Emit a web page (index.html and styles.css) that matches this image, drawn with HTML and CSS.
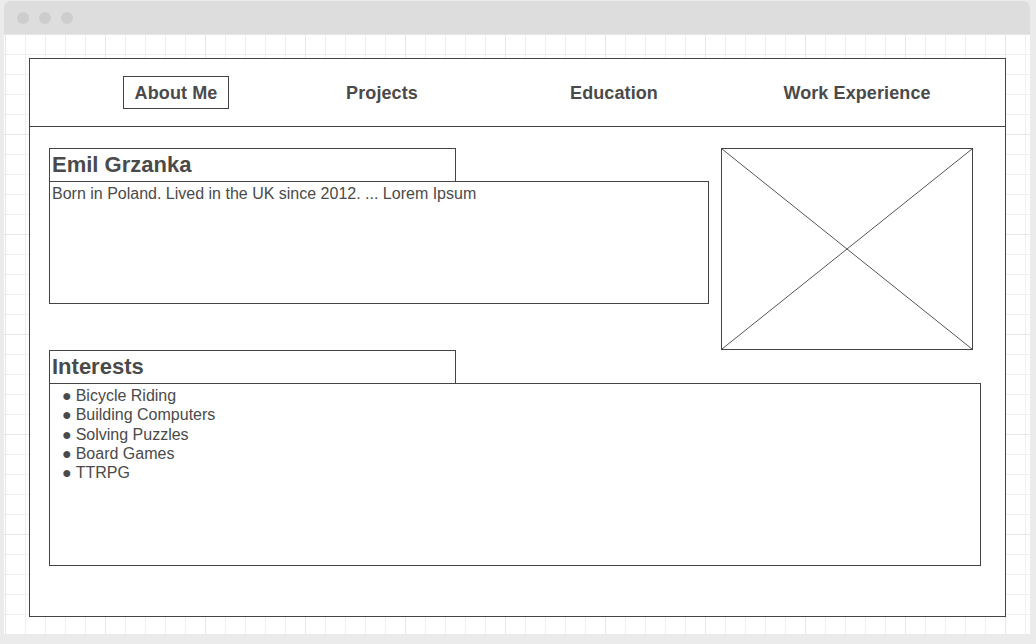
FILE: index.html
```html
<!DOCTYPE html>
<html lang="en">
<head>
    <meta charset="UTF-8">
    <meta name="viewport" content="width=device-width, initial-scale=1.0">
    <title>Emil Grzanka</title>
    <link rel="stylesheet" href="styles.css">
</head>
<body>
    <div class="window">
        <div class="titlebar">
            <span class="dot"></span>
            <span class="dot"></span>
            <span class="dot"></span>
        </div>
        <div class="canvas">
            <div class="page">
                <nav class="nav">
                    <div class="nav-item"><a href="#" class="nav-link active">About Me</a></div>
                    <div class="nav-item"><a href="#" class="nav-link">Projects</a></div>
                    <div class="nav-item"><a href="#" class="nav-link">Education</a></div>
                    <div class="nav-item"><a href="#" class="nav-link">Work Experience</a></div>
                </nav>

                <div class="content">
                    <div class="top-row">
                        <div class="about">
                            <h1 class="box-title">Emil Grzanka</h1>
                            <div class="box-body about-body">
                                Born in Poland. Lived in the UK since 2012. ... Lorem Ipsum
                            </div>
                        </div>
                        <div class="photo">
                            <svg viewBox="0 0 100 100" preserveAspectRatio="none">
                                <line x1="0" y1="0" x2="100" y2="100" vector-effect="non-scaling-stroke"></line>
                                <line x1="100" y1="0" x2="0" y2="100" vector-effect="non-scaling-stroke"></line>
                            </svg>
                        </div>
                    </div>

                    <div class="interests">
                        <h2 class="box-title">Interests</h2>
                        <ul class="box-body interest-list">
                            <li>Bicycle Riding</li>
                            <li>Building Computers</li>
                            <li>Solving Puzzles</li>
                            <li>Board Games</li>
                            <li>TTRPG</li>
                        </ul>
                    </div>
                </div>
            </div>
        </div>
    </div>
</body>
</html>
```

FILE: styles.css
```css
* {
    margin: 0;
    padding: 0;
    box-sizing: border-box;
}

body {
    font-family: "Liberation Sans", Arial, sans-serif;
    background-color: #ebebeb;
    color: #4a4a4a;
}

.window {
    width: 1026px;
    margin: 1px 0 0 4px;
    border-radius: 6px 6px 0 0;
    overflow: hidden;
    background-color: #fff;
}

.titlebar {
    height: 33px;
    background-color: #dddddd;
    display: flex;
    align-items: center;
    gap: 10px;
    padding-left: 13px;
}

.dot {
    width: 12px;
    height: 12px;
    border-radius: 50%;
    background-color: #cdcdcd;
}

.canvas {
    height: 600px;
    padding: 24px 0 0 25px;
    background-color: #fff;
    background-image:
        linear-gradient(to right, #e6e6e6 1px, transparent 1px),
        linear-gradient(to bottom, #e6e6e6 1px, transparent 1px),
        linear-gradient(to right, #efefef 1px, transparent 1px),
        linear-gradient(to bottom, #efefef 1px, transparent 1px);
    background-size: 100px 100px, 100px 100px, 20px 20px, 20px 20px;
    background-position: 1px 0, 0 0, 1px 0, 0 0;
}

.page {
    width: 977px;
    height: 559px;
    border: 1px solid #444;
    background-color: #fff;
}

/* navigation */
.nav {
    height: 68px;
    border-bottom: 1px solid #444;
    display: grid;
    grid-template-columns: 232px 180px 284px 202px;
    align-items: center;
    padding-left: 30px;
}

.nav-item {
    text-align: center;
}

.nav-link {
    display: inline-block;
    font-size: 18px;
    font-weight: bold;
    line-height: 21px;
    letter-spacing: 0.1px;
    color: #4a4a4a;
    text-decoration: none;
    padding: 6px 11px 4px;
    border: 1px solid transparent;
}

.nav-link.active {
    border-color: #444;
}

/* content */
.content {
    padding: 21px 0 0 19px;
}

.top-row {
    display: flex;
    gap: 12px;
    height: 202px;
}

.about {
    width: 660px;
}

.box-title {
    width: 407px;
    height: 33px;
    border: 1px solid #444;
    border-bottom: none;
    font-size: 22px;
    font-weight: bold;
    line-height: 32px;
    padding-left: 2px;
}

.box-body {
    border: 1px solid #444;
    font-size: 16px;
}

.about-body {
    height: 123px;
    padding: 2px 2px;
    line-height: 20px;
}

.photo {
    width: 252px;
    height: 202px;
    border: 1px solid #444;
}

.photo svg {
    display: block;
    width: 100%;
    height: 100%;
}

.photo line {
    stroke: #555;
    stroke-width: 1;
}

.interests {
    width: 932px;
}

.interest-list {
    height: 183px;
    list-style: none;
    padding: 2px 0 0 12px;
    line-height: 19.3px;
}

.interest-list li::before {
    content: "\25CF";
    margin-right: 4px;
}
```
